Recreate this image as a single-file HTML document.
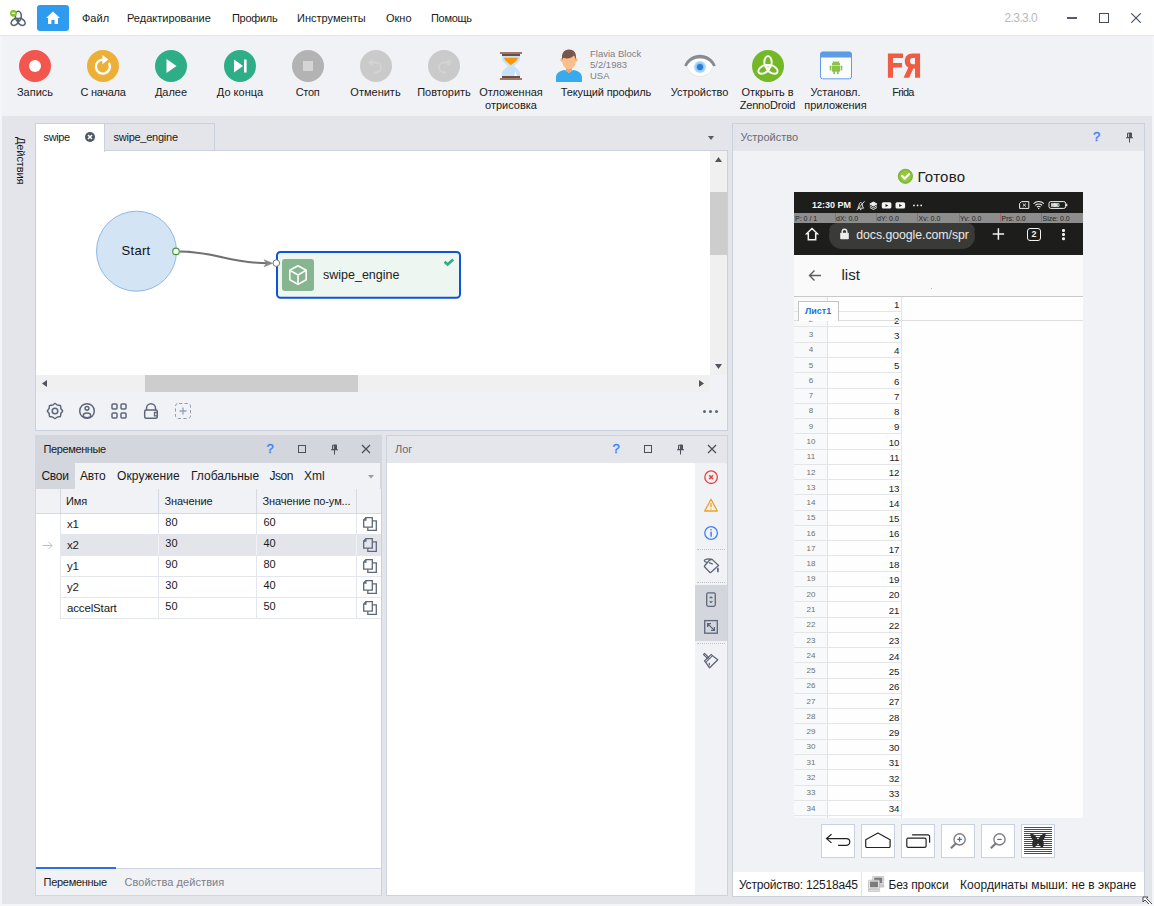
<!DOCTYPE html>
<html>
<head>
<meta charset="utf-8">
<style>
*{box-sizing:border-box;margin:0;padding:0}
html,body{width:1154px;height:906px;overflow:hidden;background:#e4e5ea;font-family:"Liberation Sans",sans-serif;color:#1a1a1a;font-size:11px}
.a{position:absolute}
.t{position:absolute;white-space:nowrap;line-height:14px}
#titlebar{left:0;top:0;width:1154px;height:35px;background:#fff}
#toolbar{left:2px;top:36px;width:1150px;height:80px;background:#f1f2f6}
.menu{top:11px;font-size:11px;color:#1a1a1a}
.tl{top:86px;font-size:11px;color:#1a1a1a;text-align:center;line-height:13px;transform:translateX(-50%)}
.circ{width:32px;height:32px;border-radius:50%;top:50px}
.panel{border:1px solid #ccd2de}
.hdr{font-size:11px;color:#555}
.ov{top:213.500px;font-size:7px;line-height:9px;color:#262626}
.dbtn{top:824px;width:34px;height:34px;background:#fff;border:1px solid #c9d0de}
</style>
</head>
<body>
<!-- TITLE BAR -->
<div id="titlebar" class="a"></div>
<div id="toolbar" class="a"></div>

<!-- SECTION:TITLE -->
<svg class="a" style="left:9px;top:9px" width="18" height="18" viewBox="0 0 18 18">
 <g fill="none" stroke="#566175" stroke-width="1.600">
  <ellipse cx="9.300" cy="7.200" rx="3" ry="5"/>
  <ellipse cx="6" cy="12.900" rx="4.300" ry="2.900" transform="rotate(-38 6 12.900)"/>
  <ellipse cx="12.300" cy="12.900" rx="4.300" ry="2.900" transform="rotate(38 12.300 12.900)"/>
 </g>
 <circle cx="4.400" cy="4.300" r="3.400" fill="#84c225"/>
 <path d="M2.300 5 a2.100 1.800 0 0 1 4.200 0 Z" fill="#eef7dc"/>
</svg>
<div class="a" style="left:37px;top:5px;width:32px;height:26px;background:#2f9bee;border-radius:3px"></div>
<svg class="a" style="left:45px;top:11px" width="16" height="14" viewBox="0 0 16 14">
 <path d="M8 0.6 L15 7 H13 V13 H9.6 V9 H6.4 V13 H3 V7 H1 Z" fill="#fff"/>
</svg>
<div class="t menu" style="left:82px">Файл</div>
<div class="t menu" style="left:127px">Редактирование</div>
<div class="t menu" style="left:232px;letter-spacing:-0.3px">Профиль</div>
<div class="t menu" style="left:297px">Инструменты</div>
<div class="t menu" style="left:386px">Окно</div>
<div class="t menu" style="left:431px;letter-spacing:-0.3px">Помощь</div>
<div class="t" style="left:1004.500px;top:10.500px;font-size:12px;color:#b9b9b9;letter-spacing:-0.6px">2.3.3.0</div>
<div class="a" style="left:1067px;top:17px;width:10px;height:1.500px;background:#555b6b"></div>
<div class="a" style="left:1099px;top:13px;width:10px;height:10px;border:1px solid #414b63"></div>
<svg class="a" style="left:1131px;top:13px" width="10" height="10" viewBox="0 0 10 10"><path d="M0.300 0.300 L9.700 9.700 M9.700 0.300 L0.300 9.700" stroke="#414b63" stroke-width="1.100" fill="none"/></svg>
<!-- SECTION:TOOLBAR -->
<!-- record -->
<div class="a circ" style="left:19px;background:#f2564e"></div>
<div class="a" style="left:29px;top:60px;width:12px;height:12px;border-radius:50%;background:#fff"></div>
<!-- restart -->
<div class="a circ" style="left:87px;background:#edb036"></div>
<svg class="a" style="left:87px;top:50px" width="32" height="32" viewBox="0 0 32 32"><path d="M22.300 13.800 A7 7 0 1 1 16 9.600" fill="none" stroke="#fff" stroke-width="2.400" stroke-linecap="round"/><path d="M15.400 5 L21.400 9.600 L15.400 14.200 Z" fill="#fff"/></svg>
<!-- next -->
<div class="a circ" style="left:155px;background:#2eae86"></div>
<svg class="a" style="left:155px;top:50px" width="32" height="32" viewBox="0 0 32 32"><path d="M11.5 9 L21.5 16 L11.5 23 Z" fill="#fff"/></svg>
<!-- to end -->
<div class="a circ" style="left:223.500px;background:#2eae86"></div>
<svg class="a" style="left:223.500px;top:50px" width="32" height="32" viewBox="0 0 32 32"><path d="M10 9.5 L19 16 L10 22.5 Z" fill="#fff"/><rect x="20" y="9.5" width="2.6" height="13" fill="#fff"/></svg>
<!-- stop -->
<div class="a circ" style="left:291.5px;background:#b3b3b3"></div>
<div class="a" style="left:302.5px;top:61px;width:10px;height:10px;background:#d4d4d4"></div>
<!-- undo -->
<div class="a circ" style="left:360px;background:#cacaca"></div>
<svg class="a" style="left:360px;top:50px" width="32" height="32" viewBox="0 0 32 32"><path d="M10 12.5 H16 A5 5 0 0 1 16 22.5 H14" fill="none" stroke="#d3d3d3" stroke-width="2"/><path d="M12.5 8.5 L8 12.5 L12.5 16.5 Z" fill="#d3d3d3"/></svg>
<!-- redo -->
<div class="a circ" style="left:428px;background:#cacaca"></div>
<svg class="a" style="left:428px;top:50px" width="32" height="32" viewBox="0 0 32 32"><path d="M22 12.5 H16 A5 5 0 0 0 16 22.5 H18" fill="none" stroke="#d3d3d3" stroke-width="2"/><path d="M19.5 8.5 L24 12.5 L19.5 16.5 Z" fill="#d3d3d3"/></svg>
<!-- hourglass -->
<svg class="a" style="left:499px;top:51px" width="24" height="30" viewBox="499 51 24 30">
 <path d="M502 56 H520 V58.500 C520 62 516 63.500 514.200 66 C516 68.500 520 70 520 73.500 V76 H502 V73.500 C502 70 506 68.500 507.800 66 C506 63.500 502 62 502 58.500 Z" fill="#c5e1fb"/>
 <path d="M504 57.800 H518 C517 61.500 513.500 63 511 65.200 C508.500 63 505 61.500 504 57.800 Z" fill="#ff9800"/>
 <path d="M514.200 75.900 L515.600 71 L517 75.900 Z" fill="#fff"/>
 <rect x="499.900" y="52" width="22.100" height="2" fill="#a1776a"/>
 <rect x="502" y="54" width="18" height="2" fill="#6d4c41"/>
 <rect x="502" y="76" width="18" height="2" fill="#6d4c41"/>
 <rect x="499.900" y="78" width="22.100" height="2" fill="#a1776a"/>
</svg>
<!-- person -->
<svg class="a" style="left:556px;top:50px;overflow:visible" width="26" height="32" viewBox="0 0 26 32">
 <path d="M0 32 V27.500 C0 22.500 4 20.600 9 19.900 L13 23 L17 19.900 C22 20.600 26 22.500 26 27.500 V32 Z" fill="#38abee"/>
 <path d="M10 15 H16 V20.300 L13 23.200 L10 20.300 Z" fill="#f1a46d"/>
 <ellipse cx="5.700" cy="9.800" rx="1.300" ry="1.900" fill="#f9b981"/>
 <ellipse cx="20.300" cy="9.800" rx="1.300" ry="1.900" fill="#f9b981"/>
 <path d="M6.200 8 C6.200 3 9 1.500 13 1.500 C17 1.500 19.800 3 19.800 8 V11 C19.800 15.500 16.500 19.200 13 19.200 C9.500 19.200 6.200 15.500 6.200 11 Z" fill="#fbbd8a"/>
 <path d="M6.300 10.200 C5 3.500 8 -0.400 13 -0.400 C18.300 -0.400 21 3.500 19.700 10.200 C19.400 8.200 18.800 6.600 17.800 5.600 C15.500 8.600 10.500 9.200 7.400 7.800 C6.900 8.400 6.500 9.200 6.300 10.200 Z" fill="#7a564a"/>
</svg>
<div class="t" style="left:590px;top:48px;font-size:9.5px;line-height:11px;color:#808080">Flavia Block<br>5/2/1983<br>USA</div>
<!-- eye -->
<svg class="a" style="left:682px;top:52px" width="36" height="28" viewBox="0 0 36 28">
 <path d="M4.700 14.400 C9.500 3.400 26.500 3.400 31.300 14.400 C26 27.700 10 27.700 4.700 14.400 Z" fill="#fff" stroke="#d9dce0" stroke-width="0.600"/>
 <path d="M2.200 13.600 C8 -0.800 28 -0.800 33.800 13.600 L31.300 14.600 C26.500 3.400 9.500 3.400 4.700 14.600 Z" fill="#868b96"/>
 <circle cx="18" cy="15" r="6" fill="#addafa"/>
 <circle cx="18" cy="15" r="4.400" fill="#8cc3f4"/>
 <circle cx="18" cy="15" r="3.100" fill="#2f7cd8"/>
</svg>
<!-- zennodroid green -->
<div class="a circ" style="left:752px;background:#74b828"></div>
<svg class="a" style="left:752px;top:50px" width="32" height="32" viewBox="0 0 32 32"><g fill="none" stroke="#fff" stroke-width="1.900">
 <ellipse cx="16" cy="12.300" rx="3.700" ry="6.200"/>
 <ellipse cx="12" cy="19.300" rx="6.200" ry="3.600" transform="rotate(-31 12 19.300)"/>
 <ellipse cx="20" cy="19.300" rx="6.200" ry="3.600" transform="rotate(31 20 19.300)"/></g></svg>
<!-- install app window -->
<svg class="a" style="left:820px;top:51.300px" width="32" height="28.800" viewBox="0 0 32 30" preserveAspectRatio="none">
 <rect x="0.500" y="1" width="31" height="28" rx="2" fill="#fafcfe" stroke="#5b9be8" stroke-width="1"/>
 <path d="M0.500 3 a2 2 0 0 1 2 -2 h27 a2 2 0 0 1 2 2 v3.800 h-31 Z" fill="#5b9be8"/>
 <g fill="#8bc34a" transform="translate(0 -0.800)">
  <path d="M11.800 15.400 a4.200 3.600 0 0 1 8.400 0 Z"/>
  <rect x="11.800" y="16" width="8.400" height="6.500" rx="0.800"/>
  <rect x="9.700" y="16" width="1.500" height="5" rx="0.750"/>
  <rect x="20.800" y="16" width="1.500" height="5" rx="0.750"/>
  <rect x="13.300" y="21.500" width="1.700" height="3.600" rx="0.800"/>
  <rect x="17" y="21.500" width="1.700" height="3.600" rx="0.800"/>
  <path d="M13 11 l1.200 1.800 M19 11 l-1.200 1.800" stroke="#8bc34a" stroke-width="0.700"/>
 </g>
</svg>
<!-- Frida logo -->
<svg class="a" style="left:887px;top:53px" width="34" height="26" viewBox="0 0 34 26">
 <path d="M0.900 0.500 H16 V5.100 H6 V10.100 H15 V14.600 H6 V24.700 H0.900 Z" fill="#ee5d43"/>
 <path d="M33.100 0.500 V24.700 H28 V15.600 H26.300 L22.200 24.700 H16.600 L21.300 14.600 C19 13.500 17.800 11.200 17.800 8.100 C17.800 3.300 20.800 0.500 25.400 0.500 Z M28 4.900 H25.800 C24 4.900 23 6.100 23 8.100 C23 10.100 24 11.300 25.800 11.300 H28 Z" fill="#ee5d43" fill-rule="evenodd"/>
</svg>
<!-- labels -->
<div class="t tl" style="left:35px">Запись</div>
<div class="t tl" style="left:103px;letter-spacing:-0.3px">С начала</div>
<div class="t tl" style="left:171px">Далее</div>
<div class="t tl" style="left:240px">До конца</div>
<div class="t tl" style="left:307.500px;letter-spacing:-0.3px">Стоп</div>
<div class="t tl" style="left:375.500px">Отменить</div>
<div class="t tl" style="left:444px">Повторить</div>
<div class="t tl" style="left:511px">Отложенная<br>отрисовка</div>
<div class="t tl" style="left:606px;letter-spacing:-0.15px">Текущий профиль</div>
<div class="t tl" style="left:699.500px">Устройство</div>
<div class="t tl" style="left:767.500px">Открыть в<br><span style="letter-spacing:-0.2px">ZennoDroid</span></div>
<div class="t tl" style="left:835.500px">Установл.<br>приложения</div>
<div class="t tl" style="left:903px;letter-spacing:-0.7px">Frida</div>
<!-- SECTION:DOC -->
<div class="a" style="left:0;top:36px;width:2px;height:870px;background:#f4f5f8"></div>
<!-- vertical side tab -->
<div class="t" style="left:28px;top:137px;font-size:11px;transform-origin:0 0;transform:rotate(90deg);color:#1a1a1a;letter-spacing:-0.1px">Действия</div>
<!-- doc panel -->
<div class="a" style="left:35px;top:150px;width:693px;height:281px;background:#fff;border:1px solid #cad0dc"></div>
<!-- tabs -->
<div class="a" style="left:35px;top:123px;width:70px;height:29px;background:#fff;border:1px solid #cad0dc;border-bottom:none"></div>
<div class="a" style="left:104px;top:123px;width:111px;height:28px;background:#e4e5ea;border:1px solid #cad0dc"></div>
<div class="t" style="left:43.500px;top:130px;letter-spacing:-0.35px">swipe</div>
<div class="t" style="left:113.500px;top:130px;letter-spacing:-0.25px">swipe_engine</div>
<svg class="a" style="left:85px;top:132px" width="10" height="10" viewBox="0 0 10 10"><circle cx="5" cy="5" r="5" fill="#505660"/><path d="M3 3 L7 7 M7 3 L3 7" stroke="#fff" stroke-width="1.500"/></svg>
<svg class="a" style="left:708px;top:135.500px" width="6" height="4" viewBox="0 0 6 4"><path d="M0 0 H6 L3 4 Z" fill="#555b66"/></svg>
<!-- vertical scrollbar -->
<div class="a" style="left:710px;top:151px;width:17px;height:224px;background:#f0f0f0"></div>
<div class="a" style="left:710px;top:192px;width:17px;height:63px;background:#cdcdcd"></div>
<svg class="a" style="left:715px;top:157px" width="7" height="5" viewBox="0 0 7 5"><path d="M3.500 0 L7 5 H0 Z" fill="#505660"/></svg>
<svg class="a" style="left:715px;top:364px" width="7" height="5" viewBox="0 0 7 5"><path d="M3.500 5 L7 0 H0 Z" fill="#505660"/></svg>
<!-- horizontal scrollbar -->
<div class="a" style="left:36px;top:375px;width:674px;height:17px;background:#f0f0f0"></div>
<div class="a" style="left:145px;top:375px;width:213px;height:17px;background:#cdcdcd"></div>
<svg class="a" style="left:42px;top:380.300px" width="5" height="7" viewBox="0 0 5 7"><path d="M0 3.500 L5 0 V7 Z" fill="#505660"/></svg>
<svg class="a" style="left:699px;top:380.300px" width="5" height="7" viewBox="0 0 5 7"><path d="M5 3.500 L0 0 V7 Z" fill="#505660"/></svg>
<div class="a" style="left:710px;top:375px;width:17px;height:17px;background:#f1f2f6"></div>
<!-- doc bottom toolbar -->
<div class="a" style="left:36px;top:392px;width:691px;height:38px;background:#f1f2f6"></div>
<svg class="a" style="left:46px;top:402px" width="150" height="18" viewBox="0 0 150 18" fill="none" stroke="#5d677a" stroke-width="1.500">
 <!-- gear -->
 <path d="M7.87 2.12 Q9.00 0.70 10.13 2.12 Q11.26 3.55 13.06 3.34 Q14.87 3.13 14.66 4.94 Q14.45 6.74 15.88 7.87 Q17.30 9.00 15.88 10.13 Q14.45 11.26 14.66 13.06 Q14.87 14.87 13.06 14.66 Q11.26 14.45 10.13 15.88 Q9.00 17.30 7.87 15.88 Q6.74 14.45 4.94 14.66 Q3.13 14.87 3.34 13.06 Q3.55 11.26 2.12 10.13 Q0.70 9.00 2.12 7.87 Q3.55 6.74 3.34 4.94 Q3.13 3.13 4.94 3.34 Q6.74 3.55 7.87 2.12 Z" stroke-linejoin="round"/>
 <circle cx="9" cy="9" r="2.800"/>
 <!-- person -->
 <circle cx="41" cy="9" r="7.300"/>
 <circle cx="41" cy="6.300" r="1.900"/>
 <ellipse cx="41" cy="13.300" rx="3.700" ry="2.400"/>
 <!-- grid -->
 <rect x="66" y="1.900" width="5" height="5" rx="1"/><rect x="75" y="1.900" width="5" height="5" rx="1"/>
 <rect x="66" y="11.100" width="5" height="5" rx="1"/><rect x="75" y="11.100" width="5" height="5" rx="1"/>
 <!-- lock -->
 <path d="M100.500 8.400 V6.300 A4.500 4.500 0 0 1 109.500 6.300 V8.400"/>
 <rect x="98.700" y="8" width="12.600" height="8.300" rx="1.500"/>
 <path d="M111.300 10.500 H108.500 V13.800 H111.300" stroke-width="1.300"/>
 <!-- dashed plus -->
 <rect x="129.500" y="1.500" width="15" height="15" rx="2.500" stroke="#939db0" stroke-width="1" stroke-dasharray="3.300 2.300" stroke-dashoffset="-1"/>
 <path d="M137 5.500 V12.500 M133.500 9 H140.500" stroke="#93a5bd" stroke-width="1.400"/>
</svg>
<div class="a" style="left:703px;top:410px;width:3px;height:3px;background:#5d677a;border-radius:50%;box-shadow:6px 0 0 #5d677a,12px 0 0 #5d677a"></div>
<!-- canvas content -->
<svg class="a" style="left:90px;top:205px" width="380" height="100" viewBox="90 205 380 100">
 <circle cx="136.500" cy="251.200" r="40" fill="#d3e4f5" stroke="#8cb9ea" stroke-width="1"/>
 <path d="M180 251.500 C215 251.500 230 263.200 268 263.200" fill="none" stroke="#707070" stroke-width="2"/>
 <path d="M264 259.800 L272.600 263.200 L264 266.800 L266.600 263.200 Z" fill="#858585" stroke="#858585" stroke-width="0.600" stroke-linejoin="round"/>
 <rect x="277" y="252" width="183" height="45.700" rx="3.500" fill="#edf6f1" stroke="#0f53d6" stroke-width="2"/>
 <rect x="282" y="259" width="32" height="32" rx="3" fill="#86b590"/>
 <g fill="none" stroke="#fff" stroke-width="1.600" stroke-linejoin="round"><path d="M298 265.700 L306.200 270.300 V279.800 L298 284.400 L289.800 279.800 V270.300 Z"/><path d="M289.800 270.300 L298 275 L306.200 270.300 M298 275 V284.400"/></g>
 <circle cx="176" cy="251.400" r="3.300" fill="#fff" stroke="#3f9a35" stroke-width="1.200"/>
 <circle cx="276.300" cy="263.100" r="3.300" fill="#fff" stroke="#777" stroke-width="1"/>
 <path d="M444.600 261.800 L447.600 264.500 L453.200 259.400" fill="none" stroke="#2eae86" stroke-width="2.700"/>
</svg>
<div class="t" style="left:121.500px;top:244px;font-size:13px;letter-spacing:.3px;color:#111">Start</div>
<div class="t" style="left:323px;top:268px;font-size:12.500px;color:#222">swipe_engine</div>
<!-- SECTION:VARS -->
<div class="a" style="left:35px;top:435px;width:347px;height:461px;background:#fff;border:1px solid #d3d6dc;border-left-color:#cfd4de"></div>
<div class="a" style="left:35px;top:435px;width:347px;height:28px;background:#d3d6dc"></div>
<div class="a" style="left:381px;top:463px;width:1px;height:432px;background:#cad0dc"></div>
<div class="t" style="left:43.500px;top:442px;letter-spacing:-0.38px">Переменные</div>
<div class="t" style="left:266.500px;top:442px;font-size:13px;color:#3b82f6;-webkit-text-stroke:0.400px #3b82f6">?</div>
<div class="a" style="left:298px;top:445px;width:8px;height:8px;border:1px solid #4b505a"></div>
<svg class="a" style="left:330px;top:444px" width="9" height="11" viewBox="0 0 9 11"><path d="M2.500 1.200 H6.500 V5.500 H2.500 Z" fill="none" stroke="#4b505a" stroke-width="1"/><path d="M4.300 1.200 H6.500 V5.500 H4.300 Z M1 5.800 H8 M4.500 6 V10.500" fill="#4b505a" stroke="#4b505a" stroke-width="1"/></svg>
<svg class="a" style="left:361px;top:444px" width="10" height="10" viewBox="0 0 10 10"><path d="M1 1 L9 9 M9 1 L1 9" stroke="#4b505a" stroke-width="1.300"/></svg>
<!-- tabs row -->
<div class="a" style="left:36px;top:463px;width:345px;height:26px;background:#f1f2f6"></div>
<div class="a" style="left:36px;top:463px;width:39px;height:26px;background:#d3d6dc"></div>
<div class="t" style="left:41.500px;top:469px;font-size:12px;letter-spacing:-0.3px">Свои</div>
<div class="t" style="left:80px;top:469px;font-size:12px;letter-spacing:-0.2px">Авто</div>
<div class="t" style="left:117px;top:469px;font-size:12px;letter-spacing:.1px">Окружение</div>
<div class="t" style="left:191px;top:469px;font-size:12px">Глобальные</div>
<div class="t" style="left:269.500px;top:469px;font-size:12px;letter-spacing:-0.5px">Json</div>
<div class="t" style="left:304px;top:469px;font-size:12px">Xml</div>
<div class="a" style="left:380px;top:463px;width:2px;height:26px;background:#d3d6dc"></div>
<svg class="a" style="left:367.500px;top:475px" width="6" height="3.500" viewBox="0 0 6 3.500"><path d="M0 0 H6 L3 3.500 Z" fill="#9a9ea8"/></svg>
<!-- table header -->
<div class="a" style="left:36px;top:489px;width:345px;height:25px;background:#f1f2f6;border-bottom:1px solid #d5d9e2"></div>
<div class="a" style="left:60px;top:489px;width:1px;height:24px;background:#d5d9e2"></div>
<div class="a" style="left:158px;top:489px;width:1px;height:24px;background:#d5d9e2"></div>
<div class="a" style="left:256px;top:489px;width:1px;height:24px;background:#d5d9e2"></div>
<div class="a" style="left:356px;top:489px;width:1px;height:24px;background:#d5d9e2"></div>
<div class="t" style="left:66px;top:494px;letter-spacing:-0.1px">Имя</div>
<div class="t" style="left:164.500px;top:494px;letter-spacing:-0.1px">Значение</div>
<div class="t" style="left:262.500px;top:494px;letter-spacing:-0.1px">Значение по-ум...</div>
<!-- table body -->
<div class="a" style="left:60px;top:514px;width:1px;height:105px;background:#e3e6ec"></div>
<div class="a" style="left:158px;top:514px;width:1px;height:105px;background:#e3e6ec"></div>
<div class="a" style="left:256px;top:514px;width:1px;height:105px;background:#e3e6ec"></div>
<div class="a" style="left:356px;top:514px;width:1px;height:105px;background:#e3e6ec"></div>
<div class="a" style="left:61px;top:534px;width:320px;height:1px;background:#e3e6ec"></div>
<div class="t" style="left:67px;top:517px;font-size:11.500px;letter-spacing:-0.150px">x1</div><div class="t" style="left:165.300px;top:514.5px;font-size:11px">80</div><div class="t" style="left:263.500px;top:514.5px;font-size:11px">60</div>
<svg class="a" style="left:363px;top:517px" width="14" height="14" viewBox="0 0 14 14" fill="none" stroke="#5d677a" stroke-width="1.300"><path d="M2.900 0.700 H9.300 V10.200 H0.700 V2.900 Z"/><path d="M0.700 3 H2.900 V0.700"/><path d="M9.300 3.900 H13.300 V13.300 H4.800 V10.200"/></svg>
<div class="a" style="left:61px;top:535px;width:320px;height:20px;background:#e4e5ea"></div>
<div class="a" style="left:61px;top:555px;width:320px;height:1px;background:#e3e6ec"></div>
<div class="t" style="left:67px;top:538px;font-size:11.500px;letter-spacing:-0.150px">x2</div><div class="t" style="left:165.300px;top:535.5px;font-size:11px">30</div><div class="t" style="left:263.500px;top:535.5px;font-size:11px">40</div>
<svg class="a" style="left:363px;top:538px" width="14" height="14" viewBox="0 0 14 14" fill="none" stroke="#5d677a" stroke-width="1.300"><path d="M2.900 0.700 H9.300 V10.200 H0.700 V2.900 Z"/><path d="M0.700 3 H2.900 V0.700"/><path d="M9.300 3.900 H13.300 V13.300 H4.800 V10.200"/></svg>
<div class="a" style="left:61px;top:576px;width:320px;height:1px;background:#e3e6ec"></div>
<div class="t" style="left:67px;top:559px;font-size:11.500px;letter-spacing:-0.150px">y1</div><div class="t" style="left:165.300px;top:556.5px;font-size:11px">90</div><div class="t" style="left:263.500px;top:556.5px;font-size:11px">80</div>
<svg class="a" style="left:363px;top:559px" width="14" height="14" viewBox="0 0 14 14" fill="none" stroke="#5d677a" stroke-width="1.300"><path d="M2.900 0.700 H9.300 V10.200 H0.700 V2.900 Z"/><path d="M0.700 3 H2.900 V0.700"/><path d="M9.300 3.900 H13.300 V13.300 H4.800 V10.200"/></svg>
<div class="a" style="left:61px;top:597px;width:320px;height:1px;background:#e3e6ec"></div>
<div class="t" style="left:67px;top:580px;font-size:11.500px;letter-spacing:-0.150px">y2</div><div class="t" style="left:165.300px;top:577.5px;font-size:11px">30</div><div class="t" style="left:263.500px;top:577.5px;font-size:11px">40</div>
<svg class="a" style="left:363px;top:580px" width="14" height="14" viewBox="0 0 14 14" fill="none" stroke="#5d677a" stroke-width="1.300"><path d="M2.900 0.700 H9.300 V10.200 H0.700 V2.900 Z"/><path d="M0.700 3 H2.900 V0.700"/><path d="M9.300 3.900 H13.300 V13.300 H4.800 V10.200"/></svg>
<div class="a" style="left:61px;top:618px;width:320px;height:1px;background:#e3e6ec"></div>
<div class="t" style="left:67px;top:601px;font-size:11.500px;letter-spacing:-0.150px">accelStart</div><div class="t" style="left:165.300px;top:598.5px;font-size:11px">50</div><div class="t" style="left:263.500px;top:598.5px;font-size:11px">50</div>
<svg class="a" style="left:363px;top:601px" width="14" height="14" viewBox="0 0 14 14" fill="none" stroke="#5d677a" stroke-width="1.300"><path d="M2.900 0.700 H9.300 V10.200 H0.700 V2.900 Z"/><path d="M0.700 3 H2.900 V0.700"/><path d="M9.300 3.900 H13.300 V13.300 H4.800 V10.200"/></svg>
<div class="a" style="left:158px;top:535px;width:1px;height:20px;background:#f2f3f6"></div><div class="a" style="left:256px;top:535px;width:1px;height:20px;background:#f2f3f6"></div><div class="a" style="left:356px;top:535px;width:1px;height:20px;background:#f2f3f6"></div>
<svg class="a" style="left:42px;top:541px" width="11" height="9" viewBox="0 0 11 9"><path d="M0.500 4.500 H10 M6.500 1 L10 4.500 L6.500 8" fill="none" stroke="#c0c0c0" stroke-width="1"/></svg>
<!-- bottom tabs -->
<div class="a" style="left:36px;top:868px;width:345px;height:27px;background:#f1f2f6;border-top:1px solid #ccd2de"></div>
<div class="a" style="left:36px;top:867px;width:80px;height:2px;background:#2f6fe0"></div>
<div class="t" style="left:43.500px;top:875px;letter-spacing:-0.28px">Переменные</div>
<div class="t" style="left:124.500px;top:875px;color:#7b7f88;letter-spacing:.08px">Свойства действия</div>
<!-- SECTION:LOG -->
<div class="a" style="left:386px;top:435px;width:342px;height:461px;background:#fff;border:1px solid #ccd2de"></div>
<div class="a" style="left:387px;top:436px;width:340px;height:27px;background:#e5e6eb"></div>
<div class="t" style="left:395px;top:442px;color:#666a74">Лог</div>
<div class="t" style="left:612.500px;top:442px;font-size:13px;color:#3b82f6;-webkit-text-stroke:0.400px #3b82f6">?</div>
<div class="a" style="left:644px;top:445px;width:8px;height:8px;border:1px solid #4b505a"></div>
<svg class="a" style="left:676px;top:444px" width="9" height="11" viewBox="0 0 9 11"><path d="M2.500 1.200 H6.500 V5.500 H2.500 Z" fill="none" stroke="#4b505a" stroke-width="1"/><path d="M4.300 1.200 H6.500 V5.500 H4.300 Z M1 5.800 H8 M4.500 6 V10.500" fill="#4b505a" stroke="#4b505a" stroke-width="1"/></svg>
<svg class="a" style="left:707px;top:444px" width="10" height="10" viewBox="0 0 10 10"><path d="M1 1 L9 9 M9 1 L1 9" stroke="#4b505a" stroke-width="1.300"/></svg>
<div class="a" style="left:695px;top:463px;width:32px;height:432px;background:#f1f2f6"></div>
<div class="a" style="left:695px;top:585px;width:32px;height:56px;background:#d3d6dc"></div>
<div class="a" style="left:697px;top:549px;width:28px;height:0;border-top:1px dotted #bfc3cb"></div>
<div class="a" style="left:697px;top:582px;width:28px;height:0;border-top:1px dotted #bfc3cb"></div>
<div class="a" style="left:697px;top:643px;width:28px;height:0;border-top:1px dotted #bfc3cb"></div>
<svg class="a" style="left:703px;top:469px" width="17" height="202" viewBox="703 469 17 202" fill="none" stroke-width="1.300">
 <!-- error -->
 <circle cx="711.100" cy="477.200" r="6.300" stroke="#e8423d"/>
 <path d="M709.200 475.300 L713 479.100 M713 475.300 L709.200 479.100" stroke="#e8423d" stroke-width="1.500"/>
 <!-- warning -->
 <path d="M711 499.200 L717.300 511 H704.700 Z" stroke="#f0a21e" stroke-linejoin="round"/>
 <path d="M711 503 V507.300 M711 508.500 V509.600" stroke="#f0a21e" stroke-width="1.300"/>
 <!-- info -->
 <circle cx="711.100" cy="533" r="6.300" stroke="#3b82f6"/>
 <path d="M711.100 531.800 V536.700 M711.100 529.200 V530.400" stroke="#3b82f6" stroke-width="1.500"/>
 <!-- bucket -->
 <g stroke="#5d677a" stroke-width="1.300" stroke-linejoin="round" stroke-linecap="round">
  <path d="M712.100 559.400 L718.600 565.500 L710.700 572.500 Q710.300 572.800 709.900 572.500 L704.500 566.800 Q704.200 566.300 704.600 565.800 L709.700 560 Z"/>
  <path d="M712 559.300 C708.500 558.600 704.400 559.200 704.300 560.700 C704.300 561.500 705.400 562 706.800 562.300"/>
  <path d="M709.500 562.800 L712.300 563.900" stroke-width="1.400"/>
  <path d="M717.900 568.600 V571.400" stroke-width="1.700"/>
 </g>
 <!-- scroll lock -->
 <g stroke="#5d677a">
  <rect x="706.700" y="592.900" width="8.600" height="13.400" rx="1.500"/>
  <path d="M709.500 598 L711 596.400 L712.500 598 Z M709.500 601.400 L711 603 L712.500 601.400 Z" fill="#5d677a" stroke-width="0.600"/>
 </g>
 <!-- expand -->
 <g stroke="#5d677a">
  <rect x="704.700" y="620.600" width="12.600" height="12.600"/>
  <path d="M707.600 623.600 L714.400 630.400 M707.600 627 V623.600 H711 M714.400 627 V630.400 H711"/>
 </g>
 <!-- brush -->
 <g stroke="#5d677a" stroke-width="1.100" stroke-linejoin="round">
  <path d="M703.500 654.500 L704.600 653.400 L708.700 657.500 L707.600 658.600 Z"/>
  <path d="M704.400 661 L711.200 654.400 L712.500 655.700 L705.700 662.300 Z"/>
  <path d="M712.500 655.700 L717.800 659.700 L709.600 667.800 L705.700 662.300" stroke-width="1.300"/>
  <path d="M709.300 662.800 V665.500" stroke-width="1.200"/>
 </g>
</svg>
<!-- SECTION:DEVICE -->
<div class="a" style="left:732px;top:123px;width:413px;height:774px;background:#f1f2f6;border:1px solid #cad0dc"></div>
<div class="a" style="left:733px;top:124px;width:411px;height:27px;background:#e4e5ea"></div>
<div class="t" style="left:740.500px;top:130px;color:#666a74">Устройство</div>
<div class="t" style="left:1093px;top:130px;font-size:13px;color:#3b82f6;-webkit-text-stroke:0.400px #3b82f6">?</div>
<svg class="a" style="left:1125px;top:132px" width="9" height="11" viewBox="0 0 9 11"><path d="M2.500 1.200 H6.500 V5.500 H2.500 Z" fill="none" stroke="#4b505a" stroke-width="1"/><path d="M4.300 1.200 H6.500 V5.500 H4.300 Z M1 5.800 H8 M4.500 6 V10.500" fill="#4b505a" stroke="#4b505a" stroke-width="1"/></svg>
<!-- ready -->
<svg class="a" style="left:897px;top:167.500px" width="17" height="17" viewBox="0 0 17 17"><circle cx="8.400" cy="8.300" r="7.100" fill="#86bf35" stroke="#6ea62a" stroke-width="0.800"/><circle cx="8.400" cy="8.300" r="5.600" fill="#93c93f"/><path d="M5 7.800 L7.800 10.600 L12 6.200" fill="none" stroke="#fff" stroke-width="2.200" stroke-linecap="round" stroke-linejoin="round"/></svg>
<div class="t" style="left:917.500px;top:168px;font-size:15px;line-height:18px;color:#222;letter-spacing:.25px">Готово</div>
<!-- phone -->
<div class="a" style="left:794px;top:192px;width:289px;height:63px;background:#1d1e1c"></div>
<div class="a" style="left:794px;top:213px;width:289px;height:9.500px;background:#8d8d8d"></div>
<div class="t" style="left:812px;top:200px;font-size:9px;font-weight:bold;color:#f4f4f4;line-height:11px">12:30 PM</div>
<svg class="a" style="left:855px;top:199px" width="70" height="13" viewBox="855 199 70 13" fill="none" stroke="#f0f0f0" stroke-width="0.900">
 <path d="M857.800 208.200 C859.300 207.200 858.600 203 860.700 202.200 C862.800 203 862.100 207.200 863.600 208.200 Z M860 209.600 H861.400 M856.800 210.200 L864.600 201.200"/>
 <path d="M873.400 202 L877 204 L873.400 206 L869.800 204 Z" fill="#f0f0f0"/><path d="M869.800 205.800 L873.400 207.800 L877 205.800 M869.800 207.500 L873.400 209.500 L877 207.500"/>
 <rect x="881.800" y="202.200" width="9.600" height="6.400" rx="1.600" fill="#f4f4f4" stroke="none"/><path d="M885.500 203.900 L888.300 205.400 L885.500 206.900 Z" fill="#1d1e1c" stroke="none"/>
 <rect x="895.500" y="202.200" width="9.600" height="6.400" rx="1.600" fill="#f4f4f4" stroke="none"/><path d="M899.200 203.900 L902 205.400 L899.200 206.900 Z" fill="#1d1e1c" stroke="none"/>
 <g fill="#f0f0f0" stroke="none"><circle cx="914" cy="205.400" r="0.900"/><circle cx="917.600" cy="205.400" r="0.900"/><circle cx="921.200" cy="205.400" r="0.900"/></g>
</svg>
<svg class="a" style="left:1018px;top:199px" width="52" height="13" viewBox="1018 199 52 13" fill="none" stroke="#f0f0f0" stroke-width="1">
 <path d="M1021.600 201.600 H1028.800 V208.400 H1019.600 V203.600 Z"/><path d="M1022.800 203.600 L1026 206.600 M1026 203.600 L1022.800 206.600" stroke-width="0.900"/>
 <path d="M1033.600 203.600 A7.400 7.400 0 0 1 1043.800 203.600 M1035.300 205.400 A5 5 0 0 1 1042.100 205.400 M1036.900 207.100 A2.700 2.700 0 0 1 1040.500 207.100" stroke-width="1.100"/><circle cx="1038.700" cy="208.500" r="0.700" fill="#f0f0f0" stroke="none"/>
 <rect x="1049" y="201.600" width="16.600" height="6.800" rx="1.800"/><rect x="1051" y="203.200" width="6.500" height="3.600" fill="#cfcfcf" stroke="none"/><path d="M1066.700 203.800 V206.200" stroke-width="1.200"/>
</svg>
<div class="t" style="left:1053.500px;top:201.500px;font-size:5.500px;line-height:7px;color:#f0f0f0;font-weight:bold">50</div>
<!-- overlay text -->
<div class="a" style="left:835px;top:213px;width:1px;height:9px;background:#7a7a7a"></div>
<div class="a" style="left:876px;top:213px;width:1px;height:9px;background:#7a7a7a"></div>
<div class="a" style="left:917px;top:213px;width:1px;height:9px;background:#7a7a7a"></div>
<div class="a" style="left:959px;top:213px;width:1px;height:9px;background:#7a7a7a"></div>
<div class="a" style="left:1000px;top:213px;width:1px;height:9px;background:#b26464"></div>
<div class="a" style="left:1041px;top:213px;width:1px;height:9px;background:#7a7a7a"></div>
<div class="t ov" style="left:795px">P: 0 / 1</div>
<div class="t ov" style="left:836px">dX: 0.0</div>
<div class="t ov" style="left:877px">dY: 0.0</div>
<div class="t ov" style="left:918.500px">Xv: 0.0</div>
<div class="t ov" style="left:960px">Yv: 0.0</div>
<div class="t ov" style="left:1001.500px">Prs: 0.0</div>
<div class="t ov" style="left:1042.500px">Size: 0.0</div>
<!-- browser bar -->
<div class="a" style="left:829px;top:222.500px;width:146px;height:26.500px;background:#3a3b39;border-radius:13px 13px 13px 13px"></div>
<div class="a" style="left:829px;top:222.500px;width:146px;height:8px;background:#3a3b39;border-radius:8px 8px 0 0"></div>
<svg class="a" style="left:804px;top:226px" width="16" height="16" viewBox="0 0 16 16"><path d="M2.600 7.800 L8 2.500 L13.400 7.800 H11.700 V13.800 H4.300 V7.800 Z" fill="none" stroke="#f2f2f2" stroke-width="1.500" stroke-linejoin="miter"/></svg>
<svg class="a" style="left:839px;top:228px" width="11" height="12" viewBox="0 0 11 12"><path d="M3.200 5 V3.600 A2.300 2.300 0 0 1 7.800 3.600 V5" fill="none" stroke="#ececec" stroke-width="1.400"/><rect x="1.200" y="4.800" width="8.600" height="6.400" rx="0.800" fill="#ececec"/></svg>
<div class="t" style="left:856.300px;top:228px;font-size:12.300px;line-height:15px;color:#e8e8e8;letter-spacing:-0.05px">docs.google.com/spr</div>
<svg class="a" style="left:992px;top:227px" width="14" height="14" viewBox="0 0 14 14"><path d="M6.400 1.300 V12.700 M0.700 7 H12.100" stroke="#f2f2f2" stroke-width="1.500" fill="none"/></svg>
<div class="a" style="left:1027.200px;top:227.800px;width:13.400px;height:12.800px;border:1.500px solid #f2f2f2;border-radius:3px"></div>
<div class="t" style="left:1027.200px;width:13.400px;text-align:center;top:229.300px;font-size:9px;line-height:10px;font-weight:bold;color:#f2f2f2">2</div>
<div class="a" style="left:1062.200px;top:229px;width:2.600px;height:2.600px;border-radius:50%;background:#f2f2f2;box-shadow:0 4.100px 0 #f2f2f2,0 8.200px 0 #f2f2f2"></div>
<!-- app bar -->
<div class="a" style="left:794px;top:255px;width:289px;height:41px;background:#f9faf9"></div>
<svg class="a" style="left:808px;top:269px" width="14" height="13" viewBox="0 0 14 13"><path d="M13 6.500 H1.800 M6.500 1.500 L1.500 6.500 L6.500 11.500" fill="none" stroke="#5b5b5b" stroke-width="1.400"/></svg>
<div class="t" style="left:841.500px;top:266px;font-size:15px;line-height:18px;color:#222">list</div>
<div class="a" style="left:931px;top:288px;width:1px;height:1px;background:#f0a0a0"></div>
<!-- sheet -->
<div class="a" style="left:794px;top:296px;width:289px;height:522px;background:#fefefe"></div>
<div class="a" style="left:794px;top:296px;width:34px;height:522px;background:#f8f9fa;border-right:1px solid #dfe1e3"></div>
<div class="a" style="left:901px;top:296px;width:1px;height:522px;background:#e6e6e6"></div>
<div class="a" style="left:794px;top:311.17px;width:108px;height:1px;background:#e4e5e5"></div><div class="t" style="left:840px;width:59.5px;text-align:right;top:299.30px;font-size:9.700px;line-height:12px;color:#1c1c1c">1</div>
<div class="a" style="left:794px;top:326.44px;width:108px;height:1px;background:#e4e5e5"></div><div class="t" style="left:840px;width:59.5px;text-align:right;top:314.57px;font-size:9.700px;line-height:12px;color:#1c1c1c">2</div>
<div class="a" style="left:794px;top:341.71px;width:108px;height:1px;background:#e4e5e5"></div><div class="t" style="left:794px;width:34px;text-align:center;top:330.14px;font-size:8px;line-height:10px;color:#707070">3</div><div class="t" style="left:840px;width:59.5px;text-align:right;top:329.84px;font-size:9.700px;line-height:12px;color:#1c1c1c">3</div>
<div class="a" style="left:794px;top:356.98px;width:108px;height:1px;background:#e4e5e5"></div><div class="t" style="left:794px;width:34px;text-align:center;top:345.41px;font-size:8px;line-height:10px;color:#707070">4</div><div class="t" style="left:840px;width:59.5px;text-align:right;top:345.11px;font-size:9.700px;line-height:12px;color:#1c1c1c">4</div>
<div class="a" style="left:794px;top:372.25px;width:108px;height:1px;background:#e4e5e5"></div><div class="t" style="left:794px;width:34px;text-align:center;top:360.68px;font-size:8px;line-height:10px;color:#707070">5</div><div class="t" style="left:840px;width:59.5px;text-align:right;top:360.38px;font-size:9.700px;line-height:12px;color:#1c1c1c">5</div>
<div class="a" style="left:794px;top:387.52px;width:108px;height:1px;background:#e4e5e5"></div><div class="t" style="left:794px;width:34px;text-align:center;top:375.95px;font-size:8px;line-height:10px;color:#707070">6</div><div class="t" style="left:840px;width:59.5px;text-align:right;top:375.65px;font-size:9.700px;line-height:12px;color:#1c1c1c">6</div>
<div class="a" style="left:794px;top:402.79px;width:108px;height:1px;background:#e4e5e5"></div><div class="t" style="left:794px;width:34px;text-align:center;top:391.22px;font-size:8px;line-height:10px;color:#707070">7</div><div class="t" style="left:840px;width:59.5px;text-align:right;top:390.92px;font-size:9.700px;line-height:12px;color:#1c1c1c">7</div>
<div class="a" style="left:794px;top:418.06px;width:108px;height:1px;background:#e4e5e5"></div><div class="t" style="left:794px;width:34px;text-align:center;top:406.49px;font-size:8px;line-height:10px;color:#707070">8</div><div class="t" style="left:840px;width:59.5px;text-align:right;top:406.19px;font-size:9.700px;line-height:12px;color:#1c1c1c">8</div>
<div class="a" style="left:794px;top:433.33px;width:108px;height:1px;background:#e4e5e5"></div><div class="t" style="left:794px;width:34px;text-align:center;top:421.76px;font-size:8px;line-height:10px;color:#707070">9</div><div class="t" style="left:840px;width:59.5px;text-align:right;top:421.46px;font-size:9.700px;line-height:12px;color:#1c1c1c">9</div>
<div class="a" style="left:794px;top:448.60px;width:108px;height:1px;background:#e4e5e5"></div><div class="t" style="left:794px;width:34px;text-align:center;top:437.03px;font-size:8px;line-height:10px;color:#707070">10</div><div class="t" style="left:840px;width:59.5px;text-align:right;top:436.73px;font-size:9.700px;line-height:12px;color:#1c1c1c">10</div>
<div class="a" style="left:794px;top:463.87px;width:108px;height:1px;background:#e4e5e5"></div><div class="t" style="left:794px;width:34px;text-align:center;top:452.30px;font-size:8px;line-height:10px;color:#707070">11</div><div class="t" style="left:840px;width:59.5px;text-align:right;top:452.00px;font-size:9.700px;line-height:12px;color:#1c1c1c">11</div>
<div class="a" style="left:794px;top:479.14px;width:108px;height:1px;background:#e4e5e5"></div><div class="t" style="left:794px;width:34px;text-align:center;top:467.57px;font-size:8px;line-height:10px;color:#707070">12</div><div class="t" style="left:840px;width:59.5px;text-align:right;top:467.27px;font-size:9.700px;line-height:12px;color:#1c1c1c">12</div>
<div class="a" style="left:794px;top:494.41px;width:108px;height:1px;background:#e4e5e5"></div><div class="t" style="left:794px;width:34px;text-align:center;top:482.84px;font-size:8px;line-height:10px;color:#707070">13</div><div class="t" style="left:840px;width:59.5px;text-align:right;top:482.54px;font-size:9.700px;line-height:12px;color:#1c1c1c">13</div>
<div class="a" style="left:794px;top:509.68px;width:108px;height:1px;background:#e4e5e5"></div><div class="t" style="left:794px;width:34px;text-align:center;top:498.11px;font-size:8px;line-height:10px;color:#707070">14</div><div class="t" style="left:840px;width:59.5px;text-align:right;top:497.81px;font-size:9.700px;line-height:12px;color:#1c1c1c">14</div>
<div class="a" style="left:794px;top:524.95px;width:108px;height:1px;background:#e4e5e5"></div><div class="t" style="left:794px;width:34px;text-align:center;top:513.38px;font-size:8px;line-height:10px;color:#707070">15</div><div class="t" style="left:840px;width:59.5px;text-align:right;top:513.08px;font-size:9.700px;line-height:12px;color:#1c1c1c">15</div>
<div class="a" style="left:794px;top:540.22px;width:108px;height:1px;background:#e4e5e5"></div><div class="t" style="left:794px;width:34px;text-align:center;top:528.65px;font-size:8px;line-height:10px;color:#707070">16</div><div class="t" style="left:840px;width:59.5px;text-align:right;top:528.35px;font-size:9.700px;line-height:12px;color:#1c1c1c">16</div>
<div class="a" style="left:794px;top:555.49px;width:108px;height:1px;background:#e4e5e5"></div><div class="t" style="left:794px;width:34px;text-align:center;top:543.92px;font-size:8px;line-height:10px;color:#707070">17</div><div class="t" style="left:840px;width:59.5px;text-align:right;top:543.62px;font-size:9.700px;line-height:12px;color:#1c1c1c">17</div>
<div class="a" style="left:794px;top:570.76px;width:108px;height:1px;background:#e4e5e5"></div><div class="t" style="left:794px;width:34px;text-align:center;top:559.19px;font-size:8px;line-height:10px;color:#707070">18</div><div class="t" style="left:840px;width:59.5px;text-align:right;top:558.89px;font-size:9.700px;line-height:12px;color:#1c1c1c">18</div>
<div class="a" style="left:794px;top:586.03px;width:108px;height:1px;background:#e4e5e5"></div><div class="t" style="left:794px;width:34px;text-align:center;top:574.46px;font-size:8px;line-height:10px;color:#707070">19</div><div class="t" style="left:840px;width:59.5px;text-align:right;top:574.16px;font-size:9.700px;line-height:12px;color:#1c1c1c">19</div>
<div class="a" style="left:794px;top:601.30px;width:108px;height:1px;background:#e4e5e5"></div><div class="t" style="left:794px;width:34px;text-align:center;top:589.73px;font-size:8px;line-height:10px;color:#707070">20</div><div class="t" style="left:840px;width:59.5px;text-align:right;top:589.43px;font-size:9.700px;line-height:12px;color:#1c1c1c">20</div>
<div class="a" style="left:794px;top:616.57px;width:108px;height:1px;background:#e4e5e5"></div><div class="t" style="left:794px;width:34px;text-align:center;top:605.00px;font-size:8px;line-height:10px;color:#707070">21</div><div class="t" style="left:840px;width:59.5px;text-align:right;top:604.70px;font-size:9.700px;line-height:12px;color:#1c1c1c">21</div>
<div class="a" style="left:794px;top:631.84px;width:108px;height:1px;background:#e4e5e5"></div><div class="t" style="left:794px;width:34px;text-align:center;top:620.27px;font-size:8px;line-height:10px;color:#707070">22</div><div class="t" style="left:840px;width:59.5px;text-align:right;top:619.97px;font-size:9.700px;line-height:12px;color:#1c1c1c">22</div>
<div class="a" style="left:794px;top:647.11px;width:108px;height:1px;background:#e4e5e5"></div><div class="t" style="left:794px;width:34px;text-align:center;top:635.54px;font-size:8px;line-height:10px;color:#707070">23</div><div class="t" style="left:840px;width:59.5px;text-align:right;top:635.24px;font-size:9.700px;line-height:12px;color:#1c1c1c">23</div>
<div class="a" style="left:794px;top:662.38px;width:108px;height:1px;background:#e4e5e5"></div><div class="t" style="left:794px;width:34px;text-align:center;top:650.81px;font-size:8px;line-height:10px;color:#707070">24</div><div class="t" style="left:840px;width:59.5px;text-align:right;top:650.51px;font-size:9.700px;line-height:12px;color:#1c1c1c">24</div>
<div class="a" style="left:794px;top:677.65px;width:108px;height:1px;background:#e4e5e5"></div><div class="t" style="left:794px;width:34px;text-align:center;top:666.08px;font-size:8px;line-height:10px;color:#707070">25</div><div class="t" style="left:840px;width:59.5px;text-align:right;top:665.78px;font-size:9.700px;line-height:12px;color:#1c1c1c">25</div>
<div class="a" style="left:794px;top:692.92px;width:108px;height:1px;background:#e4e5e5"></div><div class="t" style="left:794px;width:34px;text-align:center;top:681.35px;font-size:8px;line-height:10px;color:#707070">26</div><div class="t" style="left:840px;width:59.5px;text-align:right;top:681.05px;font-size:9.700px;line-height:12px;color:#1c1c1c">26</div>
<div class="a" style="left:794px;top:708.19px;width:108px;height:1px;background:#e4e5e5"></div><div class="t" style="left:794px;width:34px;text-align:center;top:696.62px;font-size:8px;line-height:10px;color:#707070">27</div><div class="t" style="left:840px;width:59.5px;text-align:right;top:696.32px;font-size:9.700px;line-height:12px;color:#1c1c1c">27</div>
<div class="a" style="left:794px;top:723.46px;width:108px;height:1px;background:#e4e5e5"></div><div class="t" style="left:794px;width:34px;text-align:center;top:711.89px;font-size:8px;line-height:10px;color:#707070">28</div><div class="t" style="left:840px;width:59.5px;text-align:right;top:711.59px;font-size:9.700px;line-height:12px;color:#1c1c1c">28</div>
<div class="a" style="left:794px;top:738.73px;width:108px;height:1px;background:#e4e5e5"></div><div class="t" style="left:794px;width:34px;text-align:center;top:727.16px;font-size:8px;line-height:10px;color:#707070">29</div><div class="t" style="left:840px;width:59.5px;text-align:right;top:726.86px;font-size:9.700px;line-height:12px;color:#1c1c1c">29</div>
<div class="a" style="left:794px;top:754.00px;width:108px;height:1px;background:#e4e5e5"></div><div class="t" style="left:794px;width:34px;text-align:center;top:742.43px;font-size:8px;line-height:10px;color:#707070">30</div><div class="t" style="left:840px;width:59.5px;text-align:right;top:742.13px;font-size:9.700px;line-height:12px;color:#1c1c1c">30</div>
<div class="a" style="left:794px;top:769.27px;width:108px;height:1px;background:#e4e5e5"></div><div class="t" style="left:794px;width:34px;text-align:center;top:757.70px;font-size:8px;line-height:10px;color:#707070">31</div><div class="t" style="left:840px;width:59.5px;text-align:right;top:757.40px;font-size:9.700px;line-height:12px;color:#1c1c1c">31</div>
<div class="a" style="left:794px;top:784.54px;width:108px;height:1px;background:#e4e5e5"></div><div class="t" style="left:794px;width:34px;text-align:center;top:772.97px;font-size:8px;line-height:10px;color:#707070">32</div><div class="t" style="left:840px;width:59.5px;text-align:right;top:772.67px;font-size:9.700px;line-height:12px;color:#1c1c1c">32</div>
<div class="a" style="left:794px;top:799.81px;width:108px;height:1px;background:#e4e5e5"></div><div class="t" style="left:794px;width:34px;text-align:center;top:788.24px;font-size:8px;line-height:10px;color:#707070">33</div><div class="t" style="left:840px;width:59.5px;text-align:right;top:787.94px;font-size:9.700px;line-height:12px;color:#1c1c1c">33</div>
<div class="a" style="left:794px;top:815.08px;width:108px;height:1px;background:#e4e5e5"></div><div class="t" style="left:794px;width:34px;text-align:center;top:803.51px;font-size:8px;line-height:10px;color:#707070">34</div><div class="t" style="left:840px;width:59.5px;text-align:right;top:803.21px;font-size:9.700px;line-height:12px;color:#1c1c1c">34</div>
<div class="a" style="left:794px;top:295.500px;width:289px;height:1.500px;background:#c9c9c9"></div>
<div class="a" style="left:794px;top:319.700px;width:289px;height:1px;background:#dedede"></div>
<div class="a" style="left:798px;top:301px;width:41px;height:19.500px;background:#fff;border:1px solid #c4c4c4;border-bottom:none"></div>
<div class="t" style="left:805px;top:305.500px;font-size:9px;line-height:11px;font-weight:bold;color:#1b73d8">Лист1</div>
<div class="t" style="left:794px;width:34px;text-align:center;top:314.500px;font-size:8px;line-height:10px;color:#8a8a8a;clip-path:inset(6px 0 0 0)">2</div>
<!-- device buttons -->
<div class="a dbtn" style="left:821px"></div><div class="a dbtn" style="left:861px"></div><div class="a dbtn" style="left:901px"></div><div class="a dbtn" style="left:941px"></div><div class="a dbtn" style="left:981px"></div><div class="a dbtn" style="left:1021px"></div>
<!-- device button icons -->
<svg class="a" style="left:821px;top:824px" width="234" height="34" viewBox="821 824 234 34" fill="none" stroke="#222" stroke-width="1.200">
 <path d="M831.500 834.300 L826.500 838.600 L831.500 842.900 M826.700 838.600 H846.400 A3.400 3.400 0 0 1 846.400 845.400 H838.100"/>
 <path d="M866.900 847.500 H888.900 A1.200 1.200 0 0 0 890.100 846.300 V839.700 L877.900 833 L865.700 839.700 V846.300 A1.200 1.200 0 0 0 866.900 847.500 Z" stroke-linejoin="round"/>
 <rect x="906.800" y="838.100" width="19.300" height="9.300" rx="1.400"/>
 <path d="M912.100 834.900 H928 A1.600 1.600 0 0 1 929.600 836.500 V842.700"/>
 <!-- zoom in -->
 <circle cx="959.600" cy="839.400" r="5.600" stroke="#7d7d7d" stroke-width="1.400" fill="#fdfdfd"/>
 <path d="M956 843.400 L950.900 848.300" stroke="#7d7d7d" stroke-width="2.200"/>
 <path d="M957.300 839.400 H961.900 M959.600 837.100 V841.700" stroke="#2b6fd6" stroke-width="1.100"/>
 <!-- zoom out -->
 <circle cx="999.500" cy="839.400" r="5.600" stroke="#7d7d7d" stroke-width="1.400" fill="#fdfdfd"/>
 <path d="M995.900 843.400 L990.800 848.300" stroke="#7d7d7d" stroke-width="2.200"/>
 <path d="M997.200 839.400 H1001.800" stroke="#2b6fd6" stroke-width="1.100"/>
 <!-- butterfly -->
 <g stroke="none" shape-rendering="crispEdges"><rect x="1024" y="827" width="28" height="1" fill="#4c4c4c"/><rect x="1024" y="829" width="28" height="1" fill="#4c4c4c"/><rect x="1024" y="831" width="28" height="1" fill="#4c4c4c"/><rect x="1024" y="833" width="28" height="1" fill="#4c4c4c"/><rect x="1024" y="835" width="28" height="1" fill="#4c4c4c"/><rect x="1024" y="837" width="28" height="1" fill="#4c4c4c"/><rect x="1024" y="839" width="28" height="1" fill="#4c4c4c"/><rect x="1024" y="841" width="28" height="1" fill="#4c4c4c"/><rect x="1024" y="843" width="28" height="1" fill="#4c4c4c"/><rect x="1024" y="845" width="28" height="1" fill="#4c4c4c"/><rect x="1024" y="847" width="28" height="1" fill="#4c4c4c"/><rect x="1024" y="849" width="28" height="1" fill="#4c4c4c"/><rect x="1024" y="851" width="28" height="1" fill="#4c4c4c"/><rect x="1024" y="853" width="28" height="1" fill="#4c4c4c"/>
 </g><g stroke="none"><path d="M1038 840 C1036.500 836 1033 833.200 1030.300 833.400 C1030.500 836.500 1031.500 838.800 1033.200 840.300 C1031.800 842 1031.800 845.500 1033.300 847.500 C1035.500 847.300 1037.300 845.500 1038 842.800 C1038.700 845.500 1040.500 847.300 1042.700 847.500 C1044.200 845.500 1044.200 842 1042.800 840.300 C1044.500 838.800 1045.500 836.500 1045.700 833.400 C1043 833.200 1039.500 836 1038 840 Z" fill="#2a2a2a"/>
 </g>
</svg>
<!-- status bar -->
<div class="a" style="left:733px;top:872px;width:411px;height:24px;background:#fff"></div>
<div class="a" style="left:861px;top:872px;width:1px;height:24px;background:#e1e3e8"></div>
<div class="t" style="left:739px;top:877.500px;font-size:12px;letter-spacing:-0.2px;color:#1a1a1a">Устройство: 12518a45</div>
<div class="t" style="left:888.500px;top:877.500px;font-size:12px;letter-spacing:-0.1px;color:#1a1a1a">Без прокси</div>
<div class="t" style="left:960px;top:877.500px;font-size:12px;letter-spacing:.04px;color:#1a1a1a">Координаты мыши: не в экране</div>
<!-- proxy icon -->
<svg class="a" style="left:868px;top:876px" width="17" height="16" viewBox="868 876 17 16">
 <rect x="872.700" y="876.200" width="11" height="8.600" rx="0.800" fill="#e4e4e4" stroke="#b4b4b4" stroke-width="0.700"/>
 <rect x="874.200" y="877.600" width="8" height="5.600" fill="#7c7c7c"/>
 <rect x="877" y="885.300" width="7" height="1.800" fill="#c9c9c9" stroke="#b0b0b0" stroke-width="0.400"/>
 <rect x="868.500" y="880.200" width="11" height="8.600" rx="0.800" fill="#e4e4e4" stroke="#b4b4b4" stroke-width="0.700"/>
 <rect x="870" y="881.600" width="8" height="5.600" fill="#7c7c7c"/>
 <rect x="868.300" y="889.600" width="11.400" height="1.900" fill="#dcdcdc" stroke="#b0b0b0" stroke-width="0.500"/>
</svg>
<!-- cursor -->
<svg class="a" style="left:1142px;top:896px" width="12" height="10" viewBox="0 0 12 10"><path d="M1 1 H6 L4.500 2.500 L11 9 L9 10 L3 4 L1 6 Z" fill="#fff" stroke="#222" stroke-width="0.800"/></svg>
<!-- window edges -->
<div class="a" style="left:1152px;top:36px;width:2px;height:870px;background:#f4f5f8"></div>
<div class="a" style="left:0;top:904px;width:1154px;height:2px;background:#f4f5f8"></div>
</body>
</html>
